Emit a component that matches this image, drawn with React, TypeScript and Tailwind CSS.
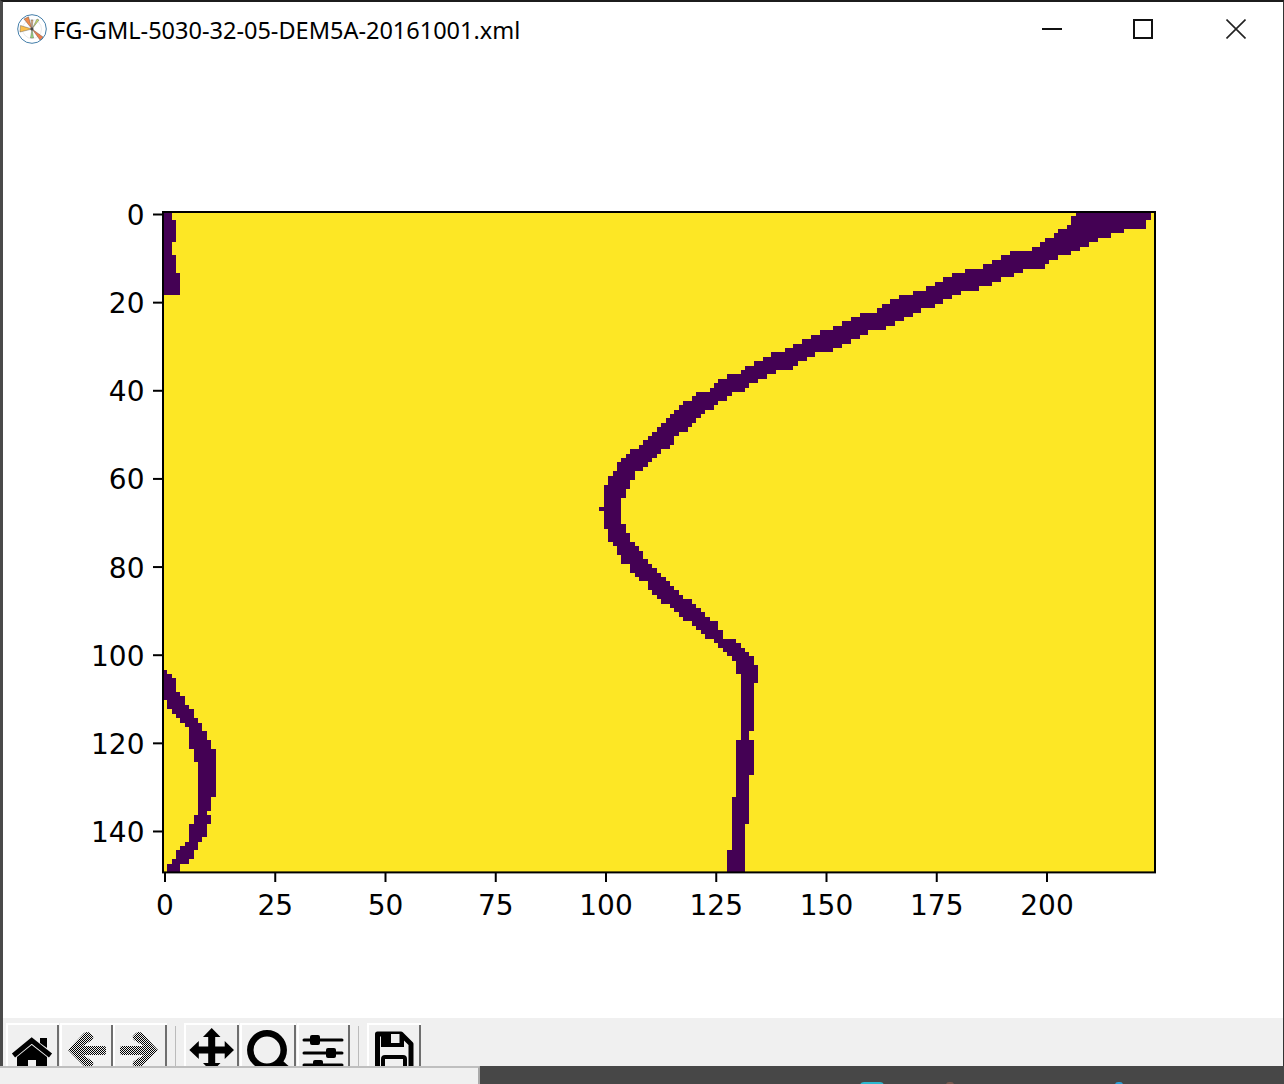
const MAIN: [number, number, number, number][] = [
  [0,0,207,224],[1,1,206,224],[2,2,206,223],[3,3,205,223],[4,4,203,218],[5,5,202,215],[6,6,200,212],[7,7,199,210],[8,8,197,208],
  [9,9,192,206],[10,10,190,203],[11,11,188,201],[12,12,186,200],[13,13,182,195],[14,14,179,193],[15,15,177,190],[16,16,175,188],
  [17,17,173,185],[18,18,170,181],[19,19,167,179],[20,20,165,177],[21,21,163,175],[22,22,162,172],[23,23,158,170],[24,24,156,168],
  [25,25,154,166],[26,26,152,164],[27,27,149,160],[28,28,147,158],[29,29,145,156],[30,30,143,154],[31,31,141,152],[32,32,138,148],
  [33,33,136,146],[34,34,134,144],[35,35,132,143],[36,36,131,139],[37,37,128,137],[38,38,126,135],[39,39,125,133],[40,40,124,132],
  [41,41,121,129],[42,42,120,128],[43,43,118,126],[44,44,117,125],[45,45,116,123],[46,46,115,122],[47,47,114,121],[48,48,113,120],[49,49,112,119],
  [50,50,111,117],[51,51,110,116],[52,52,109,116],[53,53,108,115],[54,54,106,113],[55,55,105,112],[56,56,104,111],[57,57,103,110],
  [58,58,103,109],[59,59,102,107],[60,60,101,107],[61,61,101,106],[62,62,100,106],[63,64,100,105],[65,66,100,104],[67,67,99,104],
  [68,70,100,104],[71,71,100,105],[72,72,101,105],[73,74,101,106],[75,75,102,107],[76,76,103,108],[77,77,103,109],[78,78,104,109],
  [79,79,104,110],[80,80,106,111],[81,81,106,112],[82,82,107,113],[83,83,108,114],[84,84,110,115],[85,85,110,116],[86,86,111,117],
  [87,87,112,118],[88,88,113,120],[89,89,115,121],[90,90,116,122],[91,91,117,123],[92,92,118,124],[93,93,120,126],[94,94,121,126],
  [95,95,122,127],[96,96,123,127],[97,97,125,130],[98,98,126,131],[99,99,127,132],[100,100,128,133],[101,101,129,134],[102,102,130,134],
  [103,104,130,135],[105,106,131,135],[107,117,131,134],[118,119,131,133],[120,127,130,134],[128,132,130,133],[133,138,129,133],
  [139,144,129,132],[145,149,128,132],
];
const TOP_LEFT: [number, number, number, number][] = [
  [0,1,0,2],[2,6,0,3],[7,9,0,2],[10,13,0,3],[14,18,0,4],
];
const BOTTOM_LEFT: [number, number, number, number][] = [
  [104,104,0,1],[105,105,0,2],[106,108,0,3],[109,109,0,4],[110,110,0,5],[111,111,1,5],[112,112,1,6],[113,113,2,7],[114,114,3,7],
  [115,115,4,8],[116,116,5,9],[117,117,6,9],[118,119,6,10],[120,121,6,11],[122,124,7,12],[125,132,8,12],[133,135,8,11],[136,136,8,10],
  [137,138,7,11],[139,141,6,10],[142,142,6,9],[143,143,5,8],[144,144,4,8],[145,146,3,7],[147,147,2,6],[148,149,1,4],
];
const cx = (c: number) => Math.round(162.8 + 4.41 * c);
const cy = (r: number) => Math.round(211.3 + 4.407 * r);
const spansPath = [...MAIN, ...TOP_LEFT, ...BOTTOM_LEFT]
  .map(([r0, r1, a, b]) => `M${cx(a)} ${cy(r0)}H${cx(b)}V${cy(r1 + 1)}H${cx(a)}Z`)
  .join("");

const X_TICKS = [0, 25, 50, 75, 100, 125, 150, 175, 200];
const Y_TICKS = [0, 20, 40, 60, 80, 100, 120, 140];
const xPos = (v: number) => 165 + 4.41 * v;
const yPos = (v: number) => 214.5 + 4.407 * v;
const FONT = "'DejaVu Sans', sans-serif";

function Figure() {
  return (
    <svg viewBox="3 56 1280 962" className="block w-[1280px] h-[962px]">
      <rect x="163" y="212" width="992" height="660.4" fill="#fde725" />
      <path d={spansPath} fill="#440154" shapeRendering="crispEdges" />
      <rect x="163" y="212" width="992" height="660.4" fill="none" stroke="#000" strokeWidth="2" />
      {Y_TICKS.map((v) => (
        <g key={v}>
          <line x1="153" x2="163" y1={yPos(v)} y2={yPos(v)} stroke="#000" strokeWidth="2" />
          <text x="144.5" y={yPos(v) + 10.5} textAnchor="end" fontSize="28" fontFamily={FONT} fill="#000">{v}</text>
        </g>
      ))}
      {X_TICKS.map((v) => (
        <g key={v}>
          <line x1={xPos(v)} x2={xPos(v)} y1="872" y2="882" stroke="#000" strokeWidth="2" />
          <text x={xPos(v)} y="915" textAnchor="middle" fontSize="28" fontFamily={FONT} fill="#000">{v}</text>
        </g>
      ))}
    </svg>
  );
}

function Logo() {
  return (
    <svg viewBox="0 0 30 30" className="w-[30px] h-[30px] shrink-0">
      <circle cx="15" cy="15" r="14.3" fill="#fff" stroke="#2f6f9f" strokeWidth="0.9" />
      <circle cx="15" cy="15" r="9.5" fill="none" stroke="#ccc" strokeWidth="0.4" />
      <path d="M15 15L7 5L11.5 2.8Z" fill="#f08a4b" stroke="#444" strokeWidth="0.4" />
      <path d="M15 15L3.5 11.5L3 18Z" fill="#fbbf4a" stroke="#444" strokeWidth="0.4" />
      <path d="M15 15L26 23L23 26Z" fill="#ee7b4a" stroke="#444" strokeWidth="0.4" />
      <path d="M15 15L20 5L22 6Z" fill="#c8e06a" stroke="#444" strokeWidth="0.4" />
      <path d="M15 15L13.5 24L16.5 24Z" fill="#9cdc82" stroke="#444" strokeWidth="0.4" />
      <path d="M15 15L14 6L16 6Z" fill="#f4b37a" stroke="#444" strokeWidth="0.4" />
      <circle cx="15" cy="15" r="1.6" fill="#444" />
    </svg>
  );
}

function TitleBar() {
  return (
    <div className="h-[54px] flex items-center bg-white">
      <div className="pl-[14px] flex items-center gap-[6px] flex-1 min-w-0">
        <Logo />
        <span className="mt-[3px] text-[23.5px] leading-none text-black whitespace-nowrap" style={{ fontFamily: "'Noto Sans', sans-serif" }}>
          FG-GML-5030-32-05-DEM5A-20161001.xml
        </span>
      </div>
      <div className="flex items-center h-full pr-[1px]">
        <div className="w-[88px] flex justify-center">
          <div className="w-[20px] h-[2px] bg-[#111]" />
        </div>
        <div className="w-[94px] flex justify-center">
          <div className="w-[20px] h-[20px] border-2 border-[#111]" />
        </div>
        <div className="w-[92px] flex justify-center">
          <svg viewBox="0 0 20 20" className="w-[20px] h-[20px]">
            <path d="M0.5 0.5L19.5 19.5M19.5 0.5L0.5 19.5" stroke="#222" strokeWidth="1.6" />
          </svg>
        </div>
      </div>
    </div>
  );
}

function ToolButton({ x, w, children, className }: { x: number; w: number; children: React.ReactNode; className?: string }) {
  return (
    <div className={`h-[43px] overflow-hidden shrink-0 shadow-[inset_2px_2px_0_#fff,inset_-2px_0_0_#6e6e6e] ${className ?? ""}`} style={{ width: w }}>
      <svg viewBox={`${x} 1023 ${w} 43`} width={w} height={43} className="block">
        {children}
      </svg>
    </div>
  );
}

function Toolbar() {
  return (
    <div className="h-[48px] bg-[#f0f0f0] flex items-start pl-[3px] pt-[5px]">
      <ToolButton x={6} w={53}>
        <path d="M13.5 1055.5L31.7 1040.5L50.5 1055.5" fill="none" stroke="#000" strokeWidth="5" />
        <path d="M40 1038H47V1048L40 1043Z" fill="#000" />
        <path d="M17 1057L31.7 1045L47 1057V1067H36V1060H28V1067H17Z" fill="#000" />
      </ToolButton>
      <ToolButton x={60} w={53} className="ml-[1px]">
        <defs>
          <pattern id="dither" width="2" height="2" patternUnits="userSpaceOnUse">
            <rect width="1" height="1" fill="#000" />
            <rect x="1" y="1" width="1" height="1" fill="#000" />
          </pattern>
        </defs>
        <path d="M68 1050L84 1033Q87.5 1031 90 1033L93 1036Q94 1038 92 1040L83 1046H104Q106 1046 106 1048V1053Q106 1055 104 1055H83L92 1061Q94 1063 93 1065L88 1070Z" fill="url(#dither)" />
      </ToolButton>
      <ToolButton x={113} w={54}>
        <path d="M158 1050L142 1033Q139 1031 136 1033L133 1036Q132 1038 134 1040L144 1046H122Q120 1046 120 1048V1053Q120 1055 122 1055H144L134 1061Q132 1063 133 1065L138 1070Z" fill="url(#dither)" />
      </ToolButton>
      <div className="w-[1px] h-[40px] mt-[3px] ml-[8px] bg-[#bbb] shrink-0" />
      <ToolButton x={184} w={55} className="ml-[8px]">
        <path d="M211.7 1028L220.5 1037H215.2V1046.5H224.7V1041L234 1050L224.7 1059V1053.5H215.2V1063H220.5L211.7 1072L203 1063H208.2V1053.5H198.8V1059L189.3 1050L198.8 1041V1046.5H208.2V1037H203Z" fill="#000" />
      </ToolButton>
      <ToolButton x={240} w={56} className="ml-[1px]">
        <circle cx="267" cy="1050" r="16.7" fill="none" stroke="#000" strokeWidth="6.5" />
        <path d="M279 1062L291 1073" stroke="#000" strokeWidth="7" />
      </ToolButton>
      <ToolButton x={297} w={53} className="ml-[1px]">
        <path d="M304 1040H342M304 1053H342M304 1065H342" stroke="#000" strokeWidth="3" strokeLinecap="round" />
        <rect x="310" y="1035" width="10" height="10" rx="2" fill="#000" />
        <rect x="326" y="1048" width="10" height="10" rx="2" fill="#000" />
        <rect x="313" y="1060" width="10" height="10" rx="2" fill="#000" />
      </ToolButton>
      <div className="w-[1px] h-[40px] mt-[3px] ml-[8px] bg-[#bbb] shrink-0" />
      <ToolButton x={367} w={54} className="ml-[8px]">
        <path d="M377.5 1034H401L411 1044V1070H377.5Z" fill="none" stroke="#000" strokeWidth="5" strokeLinejoin="round" />
        <path d="M381 1034H404V1047H381Z" fill="#000" />
        <rect x="391" y="1034" width="8.5" height="9" fill="#f0f0f0" />
        <rect x="383" y="1057" width="22" height="16" rx="2" fill="none" stroke="#000" strokeWidth="4" />
      </ToolButton>
    </div>
  );
}

export default function App() {
  return (
    <div className="w-[1284px] h-[1084px] overflow-hidden flex flex-col bg-white">
      <div className="h-[1066px] flex flex-col border-t-2 border-t-[#1c1c1c] border-l-[3px] border-l-[#4a4a4a] border-r border-r-[#333]">
        <TitleBar />
        <div className="flex-1 min-h-0 bg-white">
          <Figure />
        </div>
        <Toolbar />
      </div>
      <div className="h-[18px] flex">
        <div className="w-[480px] bg-[#f0f0f0] border-t-2 border-t-[#bfbfbf] border-r-2 border-r-[#aaa]" />
        <div className="relative flex-1 bg-[#474747] overflow-hidden">
          <div className="absolute left-[380px] top-[16px] w-[24px] h-[8px] rounded-full bg-[#2bb8d0]" />
          <div className="absolute left-[466px] top-[16px] w-[8px] h-[6px] rounded-full bg-[#7a5a50]" />
          <div className="absolute left-[635px] top-[16px] w-[8px] h-[6px] rounded-full bg-[#2a9fd8]" />
        </div>
      </div>
    </div>
  );
}
